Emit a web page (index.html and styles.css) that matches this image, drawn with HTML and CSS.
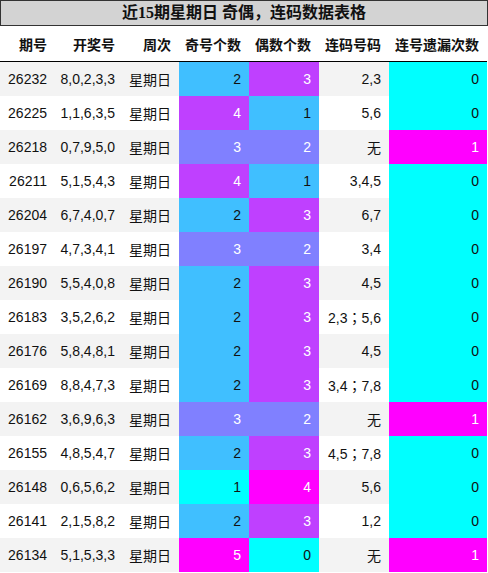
FILE: index.html
```html
<!DOCTYPE html>
<html lang="zh-CN">
<head>
    <meta charset="UTF-8">
    <meta name="viewport" content="width=device-width, initial-scale=1.0">
    <title>奇偶，连码数据表格</title>
    <link rel="stylesheet" href="styles.css">
</head>
<body>

<div class="title">近15期星期日 奇偶，连码数据表格</div>

<table class="data">
    <colgroup>
        <col class="w-id">
        <col class="w-nums">
        <col class="w-day">
        <col class="w-cnt">
        <col class="w-cnt">
        <col class="w-cnt">
        <col class="w-miss">
    </colgroup>
    <thead>
        <tr>
            <th>期号</th>
            <th>开奖号</th>
            <th>周次</th>
            <th>奇号个数</th>
            <th>偶数个数</th>
            <th>连码号码</th>
            <th>连号遗漏次数</th>
        </tr>
    </thead>
    <tbody>
        <tr><td>26232</td><td>8,0,2,3,3</td><td>星期日</td><td class="s1">2</td><td class="s3">3</td><td class="link">2,3</td><td class="s0">0</td></tr>
        <tr><td>26225</td><td>1,1,6,3,5</td><td>星期日</td><td class="s3">4</td><td class="s1">1</td><td class="link">5,6</td><td class="s0">0</td></tr>
        <tr><td>26218</td><td>0,7,9,5,0</td><td>星期日</td><td class="s2">3</td><td class="s2">2</td><td class="link">无</td><td class="s4">1</td></tr>
        <tr><td>26211</td><td>5,1,5,4,3</td><td>星期日</td><td class="s3">4</td><td class="s1">1</td><td class="link">3,4,5</td><td class="s0">0</td></tr>
        <tr><td>26204</td><td>6,7,4,0,7</td><td>星期日</td><td class="s1">2</td><td class="s3">3</td><td class="link">6,7</td><td class="s0">0</td></tr>
        <tr><td>26197</td><td>4,7,3,4,1</td><td>星期日</td><td class="s2">3</td><td class="s2">2</td><td class="link">3,4</td><td class="s0">0</td></tr>
        <tr><td>26190</td><td>5,5,4,0,8</td><td>星期日</td><td class="s1">2</td><td class="s3">3</td><td class="link">4,5</td><td class="s0">0</td></tr>
        <tr><td>26183</td><td>3,5,2,6,2</td><td>星期日</td><td class="s1">2</td><td class="s3">3</td><td class="link">2,3；5,6</td><td class="s0">0</td></tr>
        <tr><td>26176</td><td>5,8,4,8,1</td><td>星期日</td><td class="s1">2</td><td class="s3">3</td><td class="link">4,5</td><td class="s0">0</td></tr>
        <tr><td>26169</td><td>8,8,4,7,3</td><td>星期日</td><td class="s1">2</td><td class="s3">3</td><td class="link">3,4；7,8</td><td class="s0">0</td></tr>
        <tr><td>26162</td><td>3,6,9,6,3</td><td>星期日</td><td class="s2">3</td><td class="s2">2</td><td class="link">无</td><td class="s4">1</td></tr>
        <tr><td>26155</td><td>4,8,5,4,7</td><td>星期日</td><td class="s1">2</td><td class="s3">3</td><td class="link">4,5；7,8</td><td class="s0">0</td></tr>
        <tr><td>26148</td><td>0,6,5,6,2</td><td>星期日</td><td class="s0">1</td><td class="s4">4</td><td class="link">5,6</td><td class="s0">0</td></tr>
        <tr><td>26141</td><td>2,1,5,8,2</td><td>星期日</td><td class="s1">2</td><td class="s3">3</td><td class="link">1,2</td><td class="s0">0</td></tr>
        <tr><td>26134</td><td>5,1,5,3,3</td><td>星期日</td><td class="s4">5</td><td class="s0">0</td><td class="link">无</td><td class="s4">1</td></tr>
    </tbody>
</table>

</body>
</html>
```

FILE: styles.css
```css
body {
    margin: 0;
    background-color: #fff;
    font-family: "Liberation Sans", "Noto Sans CJK SC", sans-serif;
    font-size: 14px;
    color: #111;
}
.title {
    width: 486px;
    height: 24px;
    line-height: 24px;
    border: 1px solid #333;
    background-color: #d3d3d3;
    text-align: center;
    font-family: "Liberation Serif", "Noto Sans CJK SC", serif;
    font-size: 16px;
    font-weight: bold;
    color: #111;
}
.data {
    width: 487px;
    border-collapse: collapse;
    table-layout: fixed;
}
.w-id { width: 55px; }
.w-nums { width: 68px; }
.w-day { width: 56px; }
.w-cnt { width: 70px; }
.w-miss { width: 98px; }
th, td {
    padding: 0 8px 0 0;
    text-align: right;
    white-space: nowrap;
}
th {
    height: 35px;
    font-weight: bold;
    border-bottom: 1px solid #000;
}
td {
    height: 34px;
}
td.link {
    font-family: "Liberation Sans", "Noto Sans CJK TC", sans-serif;
}
tbody tr:nth-child(odd) {
    background-color: #f3f3f3;
}
.s0 { background-color: #00ffff; color: #111; }
.s1 { background-color: #40bfff; color: #111; }
.s2 { background-color: #8080ff; color: #fff; }
.s3 { background-color: #bf40ff; color: #fff; }
.s4 { background-color: #ff00ff; color: #fff; }
```
